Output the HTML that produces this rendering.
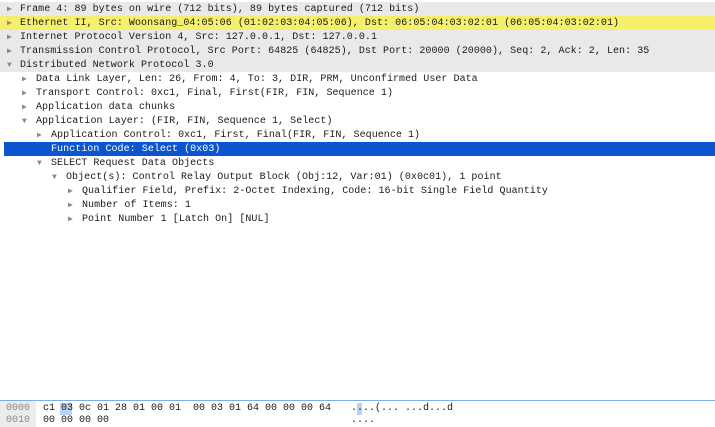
<!DOCTYPE html>
<html><head><style>
body{margin:0;width:715px;height:427px;background:#fff;position:relative;overflow:hidden;font-family:"Liberation Mono",monospace;font-size:10px;color:#1a1a1a}
.r{position:absolute;left:0;width:715px;height:14px;line-height:15px;white-space:pre}
.g{background:#e9e9e9}
.y{background:#f6ef6c}
.b{background:#0c55cf;color:#fff}
.r span.t{position:absolute;top:0;color:#888;font-size:8px}
.r span.x{position:absolute;top:0;letter-spacing:0.05px}
.h{position:absolute;left:0;height:12px;line-height:12px;white-space:pre;font-size:10px}
</style></head><body>
<div class="r g" style="top:2px"><span class="t" style="left:7px">▶</span><span class="x" style="left:20px">Frame 4: 89 bytes on wire (712 bits), 89 bytes captured (712 bits)</span></div>
<div class="r y" style="top:16px"><span class="t" style="left:7px">▶</span><span class="x" style="left:20px">Ethernet II, Src: Woonsang_04:05:06 (01:02:03:04:05:06), Dst: 06:05:04:03:02:01 (06:05:04:03:02:01)</span></div>
<div class="r g" style="top:30px"><span class="t" style="left:7px">▶</span><span class="x" style="left:20px">Internet Protocol Version 4, Src: 127.0.0.1, Dst: 127.0.0.1</span></div>
<div class="r g" style="top:44px"><span class="t" style="left:7px">▶</span><span class="x" style="left:20px">Transmission Control Protocol, Src Port: 64825 (64825), Dst Port: 20000 (20000), Seq: 2, Ack: 2, Len: 35</span></div>
<div class="r g" style="top:58px"><span class="t" style="left:7px">▼</span><span class="x" style="left:20px">Distributed Network Protocol 3.0</span></div>
<div class="r" style="top:72px"><span class="t" style="left:22px">▶</span><span class="x" style="left:36px">Data Link Layer, Len: 26, From: 4, To: 3, DIR, PRM, Unconfirmed User Data</span></div>
<div class="r" style="top:86px"><span class="t" style="left:22px">▶</span><span class="x" style="left:36px">Transport Control: 0xc1, Final, First(FIR, FIN, Sequence 1)</span></div>
<div class="r" style="top:100px"><span class="t" style="left:22px">▶</span><span class="x" style="left:36px">Application data chunks</span></div>
<div class="r" style="top:114px"><span class="t" style="left:22px">▼</span><span class="x" style="left:36px">Application Layer: (FIR, FIN, Sequence 1, Select)</span></div>
<div class="r" style="top:128px"><span class="t" style="left:37px">▶</span><span class="x" style="left:51px">Application Control: 0xc1, First, Final(FIR, FIN, Sequence 1)</span></div>
<div class="r b" style="top:142px;left:4px;width:711px"><span class="x" style="left:47px">Function Code: Select (0x03)</span></div>
<div class="r" style="top:156px"><span class="t" style="left:37px">▼</span><span class="x" style="left:51px">SELECT Request Data Objects</span></div>
<div class="r" style="top:170px"><span class="t" style="left:52px">▼</span><span class="x" style="left:66px">Object(s): Control Relay Output Block (Obj:12, Var:01) (0x0c01), 1 point</span></div>
<div class="r" style="top:184px"><span class="t" style="left:68px">▶</span><span class="x" style="left:82px">Qualifier Field, Prefix: 2-Octet Indexing, Code: 16-bit Single Field Quantity</span></div>
<div class="r" style="top:198px"><span class="t" style="left:68px">▶</span><span class="x" style="left:82px">Number of Items: 1</span></div>
<div class="r" style="top:212px"><span class="t" style="left:68px">▶</span><span class="x" style="left:82px">Point Number 1 [Latch On] [NUL]</span></div>
<div style="position:absolute;top:400px;left:0;width:715px;height:1px;background:#7ab0e8"></div>
<div style="position:absolute;top:401px;left:0;width:36px;height:26px;background:#ececec"></div>
<div style="position:absolute;top:403px;left:60px;width:12px;height:12px;background:#b9d4f2"></div>
<div style="position:absolute;top:403px;left:357px;width:5px;height:12px;background:#b9d4f2"></div>
<div class="h" style="top:403px"><span style="color:#888;position:absolute;left:6px">0000</span><span style="position:absolute;left:43px">c1 03 0c 01 28 01 00 01  00 03 01 64 00 00 00 64</span><span style="position:absolute;left:351px">....(... ...d...d</span></div>
<div class="h" style="top:415px"><span style="color:#888;position:absolute;left:6px">0010</span><span style="position:absolute;left:43px">00 00 00 00</span><span style="position:absolute;left:351px">....</span></div>
</body></html>
